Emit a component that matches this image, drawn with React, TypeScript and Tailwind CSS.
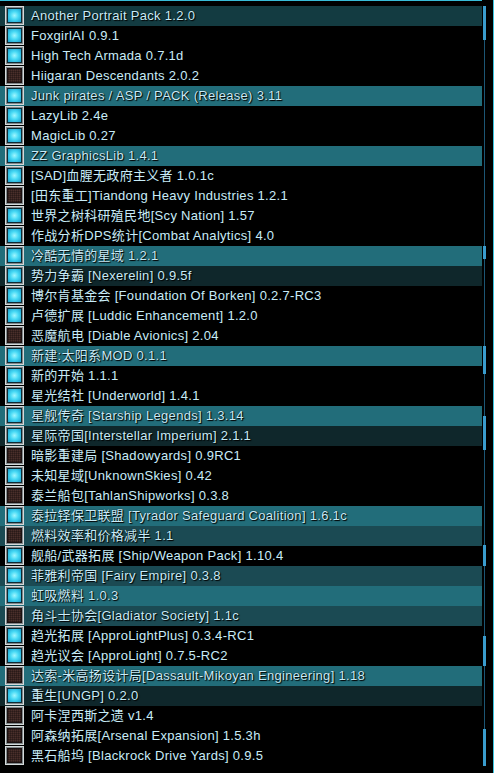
import React from "react";

type Mod = { name: string; on: boolean; bg?: string };

const TEAL = "bg-[#226d7a]";
const DEEP = "bg-[#133b41]";
const DARK = "bg-[#0f272b]";
const MID = "bg-[#1b4a53]";

const mods: Mod[] = [
  { name: "Another Portrait Pack 1.2.0", on: true, bg: DEEP },
  { name: "FoxgirlAI 0.9.1", on: true },
  { name: "High Tech Armada 0.7.1d", on: true },
  { name: "Hiigaran Descendants 2.0.2", on: false },
  { name: "Junk pirates / ASP / PACK (Release) 3.11", on: true, bg: TEAL },
  { name: "LazyLib 2.4e", on: true },
  { name: "MagicLib 0.27", on: true },
  { name: "ZZ GraphicsLib 1.4.1", on: true, bg: TEAL },
  { name: "[SAD]血腥无政府主义者 1.0.1c", on: true },
  { name: "[田东重工]Tiandong Heavy Industries 1.2.1", on: false },
  { name: "世界之树科研殖民地[Scy Nation] 1.57", on: true },
  { name: "作战分析DPS统计[Combat Analytics] 4.0", on: true },
  { name: "冷酷无情的星域 1.2.1", on: true, bg: TEAL },
  { name: "势力争霸 [Nexerelin] 0.9.5f", on: true, bg: DARK },
  { name: "博尔肯基金会 [Foundation Of Borken] 0.2.7-RC3", on: true },
  { name: "卢德扩展 [Luddic Enhancement] 1.2.0", on: true },
  { name: "恶魔航电 [Diable Avionics] 2.04", on: false },
  { name: "新建:太阳系MOD 0.1.1", on: true, bg: TEAL },
  { name: "新的开始 1.1.1", on: true },
  { name: "星光结社 [Underworld] 1.4.1", on: true },
  { name: "星舰传奇 [Starship Legends] 1.3.14", on: true, bg: TEAL },
  { name: "星际帝国[Interstellar Imperium] 2.1.1", on: true, bg: DARK },
  { name: "暗影重建局 [Shadowyards] 0.9RC1", on: false },
  { name: "未知星域[UnknownSkies] 0.42", on: true },
  { name: "泰兰船包[TahlanShipworks] 0.3.8", on: false },
  { name: "泰拉铎保卫联盟 [Tyrador Safeguard Coalition] 1.6.1c", on: true, bg: TEAL },
  { name: "燃料效率和价格减半 1.1", on: false, bg: MID },
  { name: "舰船/武器拓展 [Ship/Weapon Pack] 1.10.4", on: true },
  { name: "菲雅利帝国 [Fairy Empire] 0.3.8", on: true, bg: MID },
  { name: "虹吸燃料 1.0.3", on: true, bg: TEAL },
  { name: "角斗士协会[Gladiator Society] 1.1c", on: false, bg: MID },
  { name: "趋光拓展 [ApproLightPlus] 0.3.4-RC1", on: true },
  { name: "趋光议会 [ApproLight] 0.7.5-RC2", on: true },
  { name: "达索-米高扬设计局[Dassault-Mikoyan Engineering] 1.18", on: false, bg: TEAL },
  { name: "重生[UNGP] 0.2.0", on: true, bg: DARK },
  { name: "阿卡涅西斯之遗 v1.4", on: false },
  { name: "阿森纳拓展[Arsenal Expansion] 1.5.3h", on: false },
  { name: "黑石船坞 [Blackrock Drive Yards] 0.9.5", on: false },
];

// thumb fragments seen on the scrollbar (top, height)
const thumbs = [
  [6, 34],
  [246, 13],
  [346, 28],
  [416, 34],
  [545, 21],
  [636, 30],
  [729, 37],
];

function Check({ on }: { on: boolean }) {
  return (
    <div className="w-[19px] h-[19px] shrink-0 border border-[#d4d9da] bg-[#80878a] p-px">
      {on ? (
        <div className="w-full h-full border border-[#0e2a33] bg-[radial-gradient(circle,#a0f6ff_0%,#45d8f4_45%,#1a9ccb_100%)]" />
      ) : (
        <div className="w-full h-full border border-[#1a1010] bg-[#4a2f2b] bg-[linear-gradient(#00000040_1px,transparent_1px),linear-gradient(90deg,#00000040_1px,transparent_1px)] bg-[size:2px_2px]" />
      )}
    </div>
  );
}

export default function App() {
  return (
    <div className="w-[494px] h-[773px] bg-black flex overflow-hidden">
      <div className="w-[482px] flex flex-col">
        <div className="h-px bg-[#38bcd8]" />
        <div className="h-[5px]" />
        {mods.map((m) => (
          <div
            key={m.name}
            className={`h-[20px] flex items-start gap-[7px] pl-[5px] ${m.bg ?? ""}`}
          >
            <Check on={m.on} />
            <span className="leading-[20px] whitespace-nowrap text-[13px] tracking-[0.3px] text-[#c8ecf8] font-['Liberation_Sans','Noto_Sans_CJK_SC',sans-serif] [text-shadow:0_0_1px_#000,1px_1px_1px_#000]">
              {m.name}
            </span>
          </div>
        ))}
      </div>
      <div className="relative w-[11px]">
        <div className="absolute left-[2px] top-[6px] h-[760px] w-px bg-[#1c5674]" />
        {thumbs.map(([t, h]) => (
          <div
            key={t}
            className="absolute left-px w-[3px] bg-[#3a9ccd]"
            style={{ top: t, height: h }}
          />
        ))}
      </div>
      <div className="w-px bg-[#3cc6e0]" />
    </div>
  );
}
